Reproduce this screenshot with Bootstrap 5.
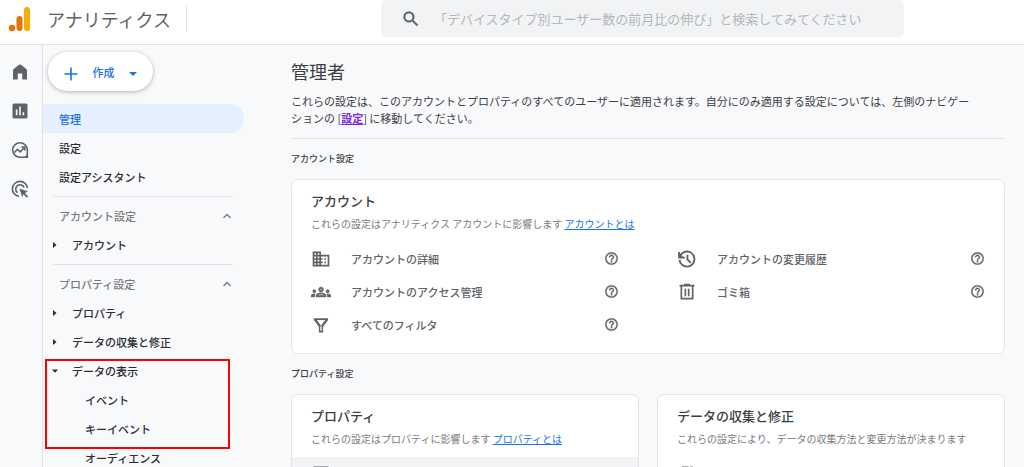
<!DOCTYPE html>
<html lang="ja">
<head>
<meta charset="utf-8">
<meta name="viewport" content="width=device-width, initial-scale=1">
<title>アナリティクス - 管理者</title>
<link href="https://cdn.jsdelivr.net/npm/bootstrap@5.3.0/dist/css/bootstrap.min.css" rel="stylesheet">
<style>
  :root { --ink: #3c4043; --muted: #5f6368; --line: #e0e2e6; --blue: #1a73e8; --page: #f8f9fb; }
  body { font-family: "Noto Sans CJK JP", Roboto, sans-serif; font-size: 11px; line-height: 16px; color: var(--ink); background: var(--page); }
  svg { fill: currentColor; flex: none; display: block; }
  a { color: inherit; text-decoration: none; }

  .topbar { background: #fff; border-bottom: 1px solid var(--line); height: 45px; padding-bottom: 7px; }
  .brand-area { flex: 0 0 381px; padding-left: 8px; }
  .brand-name { font-size: 18px; line-height: 26px; color: var(--muted); margin-left: 15px; }
  .brand-rule { width: 1px; height: 26px; background: var(--line); margin-left: 15px; }
  .search-box { flex: 0 1 523px; background: #f1f3f4; border-radius: 5px; padding: 0 20px; color: var(--muted); }
  .search-box input { border: 0; background: none; outline: 0; font-size: 13px; padding: 0 0 0 13px; color: var(--ink); }
  .search-box input::placeholder { color: #b4b7bb; opacity: 1; }

  .rail { width: 43px; border-right: 1px solid var(--line); padding: 17px 3px 0 0; gap: 19px; color: var(--muted); }
  .side { width: 201px; padding-top: 7px; }
  .scroller { overflow-y: auto; scrollbar-width: none; }
  .scroller::-webkit-scrollbar { display: none; }
  .create-btn { width: 105px; height: 39px; border: 0; border-radius: 20px; background: #fff; color: var(--blue); font-weight: 500; margin: 0 0 13px 5px; padding: 0 14px; box-shadow: 0 1px 4px rgba(60,64,67,.38); }
  .side-link { height: 29px; padding: 1px 0 0 16px; color: #2b2d31; font-weight: 500; }
  .side-link.active { background: #e6effe; color: var(--blue); border-radius: 0 15px 15px 0; }
  .side-group { height: 29px; padding: 1px 12px 0 16px; color: #777b80; width: 100%; border: 0; background: none; font-weight: 500; }
  .side-rule { height: 1px; background: var(--line); margin: 5px 11px 4px 10px; }
  .tree { padding-left: 10px; gap: 15px; }
  .leaf { padding-left: 42px; }
  .marked { position: relative; }
  .marked::after { content: ""; position: absolute; inset: 3px 14px -6px 2px; border: 2px solid #f00; pointer-events: none; }

  .content-area { padding: 13px 19px 0 47px; }
  .page-title { font-size: 18px; line-height: 26px; font-weight: 400; margin: 0 0 9px; }
  .intro { line-height: 17px; margin: 0; }
  .intro a { color: #7627e0; font-weight: 700; text-decoration: underline; }
  .content-rule { height: 1px; background: var(--line); margin-top: 11px; }
  .section-name { font-size: 9px; line-height: 16px; font-weight: 500; margin: 12px 0; }
  .panel { background: #fff; border: 1px solid #e3e5e8; border-radius: 7px; padding: 12px 19px 12px; }
  .panel h3 { font-size: 13px; line-height: 18px; font-weight: 500; margin: 0 0 6px; }
  .panel-note { font-size: 10px; line-height: 16px; color: #777b80; margin: 0 0 10px; }
  .panel-note a { color: var(--blue); text-decoration: underline; }
  .two-up { display: grid; grid-template-columns: 1fr 1fr; column-gap: 58px; }
  .panel-pair { display: grid; grid-template-columns: 1fr 1fr; column-gap: 18px; }
  .entry { height: 33px; color: var(--muted); font-weight: 500; }
  .entry a { margin-left: 20px; flex: 1; }
  .entry.hot { background: #f1f3f4; margin: 0 -19px; padding: 0 19px; }
  .help { border: 0; background: none; padding: 0; color: var(--muted); }
</style>
</head>
<body>
<svg width="0" height="0" class="position-absolute" aria-hidden="true">
  <symbol id="i-help" viewBox="0 0 24 24"><path d="M11 18h2v-2h-2v2zm1-16C6.480 2 2 6.480 2 12s4.480 10 10 10 10-4.480 10-10S17.520 2 12 2zm0 18c-4.410 0-8-3.590-8-8s3.590-8 8-8 8 3.590 8 8-3.590 8-8 8zm0-14c-2.210 0-4 1.790-4 4h2c0-1.100.9-2 2-2s2 .9 2 2c0 2-3 1.750-3 5h2c0-2.250 3-2.500 3-5 0-2.210-1.790-4-4-4z" stroke="currentColor" stroke-width=".5"/></symbol>
  <symbol id="i-domain" viewBox="0 0 24 24"><path d="M12 7V3H2v18h20V7H12zM6 19H4v-2h2v2zm0-4H4v-2h2v2zm0-4H4V9h2v2zm0-4H4V5h2v2zm4 12H8v-2h2v2zm0-4H8v-2h2v2zm0-4H8V9h2v2zm0-4H8V5h2v2zm10 12h-8v-2h2v-2h-2v-2h2v-2h-2V9h8v10zm-2-8h-2v2h2v-2zm0 4h-2v2h2v-2z"/></symbol>
  <symbol id="i-groups" viewBox="0 0 24 24"><path d="M4 13c1.100 0 2-.9 2-2s-.9-2-2-2-2 .9-2 2 .9 2 2 2zm1.130 1.100C4.760 14.040 4.390 14 4 14c-.99 0-1.930.21-2.780.58C.48 14.900 0 15.620 0 16.430V18h4.500v-1.610c0-.83.23-1.610.63-2.290zM20 13c1.100 0 2-.9 2-2s-.9-2-2-2-2 .9-2 2 .9 2 2 2zm4 3.430c0-.81-.48-1.530-1.220-1.850C21.930 14.210 20.990 14 20 14c-.39 0-.76.04-1.130.1.400.68.63 1.460.63 2.290V18H24v-1.570zm-7.760-2.780C15.070 13.130 13.630 12.750 12 12.750s-3.070.39-4.240.9C6.680 14.130 6 15.210 6 16.390V18h12v-1.610c0-1.180-.68-2.260-1.760-2.740zM8.070 16c.09-.23.13-.39.91-.69.97-.38 1.990-.56 3.020-.56s2.050.18 3.020.56c.77.3.81.46.91.69H8.070zM12 6c-1.660 0-3 1.340-3 3s1.340 3 3 3 3-1.340 3-3-1.340-3-3-3zm0 4c-.55 0-1-.45-1-1s.45-1 1-1 1 .45 1 1-.45 1-1 1z" stroke="currentColor" stroke-width=".4"/></symbol>
  <symbol id="i-filter" viewBox="0 0 24 24"><path fill-rule="evenodd" d="M3.500 4h17v2l-6 8v7h-5v-7l-6-8zm3.500 2l5 6.800L17 6zm4.200 7.500V19h1.600v-5.500z"/></symbol>
  <symbol id="i-history" viewBox="0 0 24 24"><path d="M2.500 3.500v6.800h6.800M3.300 9.500A9 9 0 1 1 3 13M12.500 7v5.500l4 4" fill="none" stroke="currentColor" stroke-width="2.200"/><path d="M2 4v6.500h6.500z"/></symbol>
  <symbol id="i-trash" viewBox="0 0 24 24"><path fill-rule="evenodd" d="M8.500 2h7v1.300H21v2h-1.200V21H4.200V5.300H3v-2h5.500zM6.200 5.300V19h11.600V5.300zM9 8h2v9H9zm4 0h2v9h-2z"/></symbol>
  <symbol id="i-window" viewBox="0 0 24 24"><path fill-rule="evenodd" d="M3 3h18v18H3zm2 5v11h14V8z"/></symbol>
  <symbol id="i-stream" viewBox="0 0 24 24"><path d="M6 3h8v2.500H6zm10 0h3v2.500h-3zM4 10h12v3H4zm3 7h12v3H7z"/></symbol>
  <symbol id="i-right" viewBox="0 0 4 6"><path d="M0 0l3.500 3L0 6z"/></symbol>
  <symbol id="i-up" viewBox="0 0 10 6"><path d="M1.500 5l3.500-3.500L8.500 5" fill="none" stroke="currentColor" stroke-width="1.300"/></symbol>
</svg>

<div class="vh-100 d-flex flex-column overflow-hidden">
  <header class="topbar d-flex flex-shrink-0">
    <div class="brand-area d-flex align-items-center">
      <svg width="24" height="28" viewBox="0 0 24 28"><circle cx="4" cy="23" r="3.200" fill="#e37400"/><rect x="8.500" y="11" width="6" height="15" rx="3" fill="#e37400"/><rect x="16" y="2" width="6" height="24" rx="3" fill="#f9ab00"/></svg>
      <span class="brand-name text-nowrap">アナリティクス</span>
      <span class="brand-rule"></span>
    </div>
    <label class="search-box d-flex align-items-center" for="q">
      <svg width="20" height="20" viewBox="0 0 24 24" aria-hidden="true"><path stroke="currentColor" stroke-width=".5" d="M15.500 14h-.79l-.28-.27A6.471 6.471 0 0 0 16 9.500 6.500 6.500 0 1 0 9.500 16c1.610 0 3.090-.59 4.230-1.570l.27.28v.79l5 4.990L20.490 19l-4.990-5zm-6 0C7.010 14 5 11.990 5 9.500S7.010 5 9.500 5 14 7.010 14 9.500 11.990 14 9.500 14z"/></svg>
      <input id="q" type="text" class="flex-grow-1" aria-label="検索" placeholder="「デバイスタイプ別ユーザー数の前月比の伸び」と検索してみてください">
    </label>
  </header>

  <div class="d-flex flex-grow-1 overflow-hidden">
    <nav class="rail d-flex flex-column align-items-center flex-shrink-0" aria-label="メイン">
      <a href="#" aria-label="ホーム"><svg width="20" height="20" viewBox="0 0 20 20"><path d="M3 8.500Q3 7.500 4 6.700L9 2.800Q10 2 11 2.800L16 6.700Q17 7.500 17 8.500V17.500H12.200V11.500H7.800V17.500H3z"/></svg></a>
      <a href="#" aria-label="レポート"><svg width="20" height="20" viewBox="0 0 20 20"><path fill-rule="evenodd" d="M4 2.500h12a1.500 1.500 0 0 1 1.500 1.500v12a1.500 1.500 0 0 1-1.500 1.500H4A1.500 1.500 0 0 1 2.500 16V4A1.500 1.500 0 0 1 4 2.500zM5.800 8.500v5.700h1.600V8.500zm3.400-3v8.700h1.600V5.500zm3.400 5.800v2.900h1.600v-2.900z"/></svg></a>
      <a href="#" aria-label="探索"><svg width="20" height="20" viewBox="0 0 20 20"><path d="M10 2.700a7.300 7.300 0 1 0 0 14.600h7.300V10A7.300 7.300 0 0 0 10 2.700z" fill="none" stroke="currentColor" stroke-width="1.600"/><path d="M4.500 12.500l3-3.200 2.700 2.500 4.300-4.300M11.300 7h3.500v3.500" fill="none" stroke="currentColor" stroke-width="1.600"/><path d="M13 17.500q3.500-1 4.500-4.500v4.500z"/></svg></a>
      <a href="#" aria-label="広告"><svg width="20" height="20" viewBox="0 0 20 20"><g fill="none" stroke="currentColor" stroke-width="1.600"><path d="M9 17.300A7.500 7.500 0 1 1 17.400 9"/><path d="M7.500 13.700A4.400 4.400 0 1 1 14.200 8.500"/></g><path d="M9.500 9.500l8.500 3-3.200 1.500 3.400 3.400-1.300 1.300-3.400-3.400-1.300 3z"/></svg></a>
    </nav>

    <nav class="side scroller flex-shrink-0" aria-label="管理メニュー">
      <button type="button" class="create-btn d-flex align-items-center justify-content-between">
        <svg width="18" height="18" viewBox="0 0 18 18" class="mt-1"><path d="M8.200 2.500h1.600v5.700h5.700v1.600H9.800v5.700H8.200V9.800H2.500V8.200h5.700z"/></svg>
        <span>作成</span>
        <svg width="12" height="6" viewBox="0 0 12 6" class="mt-1"><path d="M2 1h8L6 5z"/></svg>
      </button>
      <a href="#" class="side-link active d-flex align-items-center" aria-current="page">管理</a>
      <a href="#" class="side-link d-flex align-items-center">設定</a>
      <a href="#" class="side-link d-flex align-items-center">設定アシスタント</a>
      <div class="side-rule"></div>
      <button type="button" class="side-group d-flex align-items-center justify-content-between">アカウント設定<svg width="10" height="6"><use href="#i-up"/></svg></button>
      <a href="#" class="side-link tree d-flex align-items-center"><svg width="4" height="6"><use href="#i-right"/></svg>アカウント</a>
      <div class="side-rule"></div>
      <button type="button" class="side-group d-flex align-items-center justify-content-between">プロパティ設定<svg width="10" height="6"><use href="#i-up"/></svg></button>
      <a href="#" class="side-link tree d-flex align-items-center"><svg width="4" height="6"><use href="#i-right"/></svg>プロパティ</a>
      <a href="#" class="side-link tree d-flex align-items-center"><svg width="4" height="6"><use href="#i-right"/></svg>データの収集と修正</a>
      <div class="marked">
        <a href="#" class="side-link tree d-flex align-items-center"><svg width="4" height="6" viewBox="0 0 4 6" overflow="visible"><path d="M-1 1.500h6L2 4.700z"/></svg>データの表示</a>
        <a href="#" class="side-link leaf d-flex align-items-center">イベント</a>
        <a href="#" class="side-link leaf d-flex align-items-center">キーイベント</a>
      </div>
      <a href="#" class="side-link leaf d-flex align-items-center">オーディエンス</a>
    </nav>

    <main class="content-area scroller flex-grow-1">
      <h1 class="page-title">管理者</h1>
      <p class="intro">これらの設定は、このアカウントとプロパティのすべてのユーザーに適用されます。自分にのみ適用する設定については、左側のナビゲー<br>ションの [<a href="#">設定</a>] に移動してください。</p>
      <div class="content-rule"></div>

      <h2 class="section-name">アカウント設定</h2>
      <section class="panel">
        <h3>アカウント</h3>
        <p class="panel-note">これらの設定はアナリティクス アカウントに影響します <a href="#">アカウントとは</a></p>
        <div class="two-up">
          <div>
            <div class="entry d-flex align-items-center"><svg width="20" height="20"><use href="#i-domain"/></svg><a href="#">アカウントの詳細</a><button type="button" class="help" aria-label="ヘルプ"><svg width="15" height="15"><use href="#i-help"/></svg></button></div>
            <div class="entry d-flex align-items-center"><svg width="20" height="20"><use href="#i-groups"/></svg><a href="#">アカウントのアクセス管理</a><button type="button" class="help" aria-label="ヘルプ"><svg width="15" height="15"><use href="#i-help"/></svg></button></div>
            <div class="entry d-flex align-items-center"><svg width="20" height="20"><use href="#i-filter"/></svg><a href="#">すべてのフィルタ</a><button type="button" class="help" aria-label="ヘルプ"><svg width="15" height="15"><use href="#i-help"/></svg></button></div>
          </div>
          <div>
            <div class="entry d-flex align-items-center"><svg width="20" height="20"><use href="#i-history"/></svg><a href="#">アカウントの変更履歴</a><button type="button" class="help" aria-label="ヘルプ"><svg width="15" height="15"><use href="#i-help"/></svg></button></div>
            <div class="entry d-flex align-items-center"><svg width="20" height="20"><use href="#i-trash"/></svg><a href="#">ゴミ箱</a><button type="button" class="help" aria-label="ヘルプ"><svg width="15" height="15"><use href="#i-help"/></svg></button></div>
          </div>
        </div>
      </section>

      <h2 class="section-name">プロパティ設定</h2>
      <div class="panel-pair">
        <section class="panel">
          <h3>プロパティ</h3>
          <p class="panel-note">これらの設定はプロパティに影響します <a href="#">プロパティとは</a></p>
          <div class="entry hot d-flex align-items-center"><svg width="20" height="20"><use href="#i-window"/></svg></div>
        </section>
        <section class="panel">
          <h3>データの収集と修正</h3>
          <p class="panel-note">これらの設定により、データの収集方法と変更方法が決まります</p>
          <div class="entry d-flex align-items-center"><svg width="20" height="20"><use href="#i-stream"/></svg></div>
        </section>
      </div>
    </main>
  </div>
</div>
<script src="https://cdn.jsdelivr.net/npm/bootstrap@5.3.0/dist/js/bootstrap.bundle.min.js"></script>
</body>
</html>
